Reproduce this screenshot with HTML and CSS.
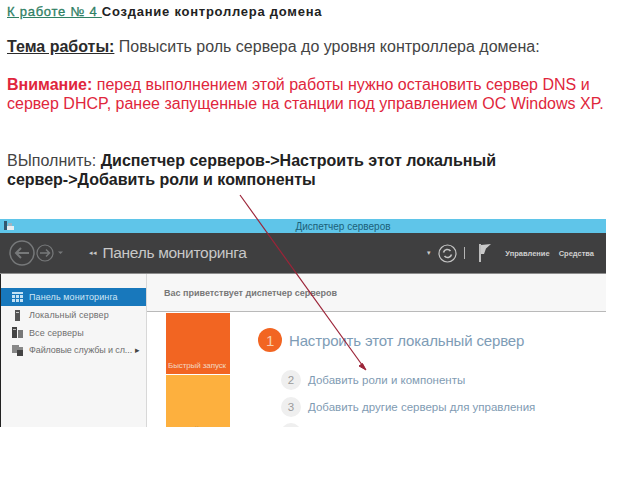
FILE: index.html
```html
<!DOCTYPE html>
<html lang="ru">

<head>
    <meta charset="UTF-8">
    <title>К работе № 4</title>
    <link rel="stylesheet" href="styles.css">
</head>

<body>
    <div class="slide">
        <div class="notes">
            <p class="title"><u class="green">К работе № 4 </u>Создание контроллера домена</p>
            <p class="topic"><b><u>Тема работы:</u></b> Повысить роль сервера до уровня контроллера домена:</p>
            <p class="warn"><b>Внимание:</b> перед выполнением этой работы нужно остановить сервер DNS и<br>сервер DHCP, ранее запущенные на станции под управлением ОС Windows XP.</p>
            <p class="todo">ВЫполнить: <b>Диспетчер серверов-&gt;Настроить этот локальный<br>сервер-&gt;Добавить роли и компоненты</b></p>
        </div>

        <div class="window">
            <div class="titlebar">
                <svg class="appicon" width="12" height="12" viewBox="0 0 12 12">
                    <rect x="1" y="1" width="3" height="9" fill="#34566e" />
                    <rect x="4" y="6" width="7" height="4" fill="#e8eef2" />
                    <rect x="5" y="3" width="4" height="3" fill="#9fb4c2" />
                </svg>
                <span>Диспетчер серверов</span>
            </div>
            <div class="toolbar">
                <div class="navs">
                    <svg width="56" height="28" viewBox="0 0 56 28" fill="none" stroke="#77797a">
                        <circle cx="13" cy="14" r="12" stroke-width="1.5" />
                        <path d="M20 14H7M12 9l-5 5 5 5" stroke-width="2" />
                        <circle cx="36" cy="14" r="8" stroke-width="1.2" />
                        <path d="M31 14h9M37 10.500l3.500 3.500-3.500 3.500" stroke-width="1.5" />
                        <path d="M49 12.500h5l-2.500 2.500z" fill="#77797a" stroke="none" />
                    </svg>
                </div>
                <div class="crumb"><span class="chev">◂◂</span>Панель мониторинга</div>
                <div class="tools">
                    <span class="dot">▾</span>
                    <svg width="19" height="19" viewBox="0 0 19 19" fill="none" stroke="#c4c4c4">
                        <circle cx="9.500" cy="9.500" r="8.500" stroke-width="1.200" />
                        <path d="M5.500 8.500a4 4 0 0 1 7-1.500M13.500 10.500a4 4 0 0 1-7 1.500" stroke-width="1.600" />
                    </svg>
                    <span class="sep"></span>
                    <svg class="flag" width="12" height="18" viewBox="0 0 12 18">
                        <rect x="0" y="0" width="2" height="18" fill="#bdbdbd" />
                        <path d="M2 1L12 0 7 4.500 5 10H2z" fill="#c9c9c9" />
                    </svg>
                    <span class="menu">Управление</span>
                    <span class="menu">Средства</span>
                </div>
            </div>
            <div class="body">
                <ul class="side">
                    <li class="active">
                        <svg class="ico" width="11" height="10" viewBox="0 0 11 10" fill="#c4e2f5">
                            <rect width="11" height="2" />
                            <rect y="3" width="3" height="3" />
                            <rect x="4" y="3" width="3" height="3" />
                            <rect x="8" y="3" width="3" height="3" />
                            <rect y="7" width="3" height="3" />
                            <rect x="4" y="7" width="3" height="3" />
                            <rect x="8" y="7" width="3" height="3" />
                        </svg>
                        Панель мониторинга
                    </li>
                    <li>
                        <svg class="ico" width="11" height="11" viewBox="0 0 11 11">
                            <rect x="3" width="5" height="11" fill="#555" />
                            <rect x="4" y="2" width="3" height="1" fill="#ccc" />
                        </svg>
                        Локальный сервер
                    </li>
                    <li>
                        <svg class="ico" width="11" height="11" viewBox="0 0 11 11">
                            <rect width="5" height="11" fill="#444" />
                            <rect x="6" y="3" width="5" height="8" fill="#777" />
                            <rect x="1" y="2" width="3" height="1" fill="#bbb" />
                        </svg>
                        Все серверы
                    </li>
                    <li>
                        <svg class="ico" width="11" height="11" viewBox="0 0 11 11">
                            <rect width="7" height="2" fill="#888" />
                            <rect y="2" width="11" height="6" fill="#888" />
                            <rect x="5" y="5" width="6" height="6" fill="#444" />
                        </svg>
                        <span class="tight">Файловые службы и сл...</span><span class="more">▸</span>
                    </li>
                </ul>
                <div class="main">
                    <div class="hello">Вас приветствует диспетчер серверов</div>
                    <div class="panel">
                        <div class="tiles">
                            <div class="tile orange">Быстрый запуск</div>
                            <div class="tile yellow">Настройки</div>
                        </div>
                        <div class="steps">
                            <div class="step first"><span class="num">1</span>Настроить этот локальный сервер</div>
                            <div class="step"><span class="num">2</span>Добавить роли и компоненты</div>
                            <div class="step"><span class="num">3</span>Добавить другие серверы для управления</div>
                            <div class="step"><span class="num"></span></div>
                        </div>
                    </div>
                </div>
            </div>
        </div>

        <svg class="arrow" width="640" height="480" viewBox="0 0 640 480">
            <path d="M240 195L365 369" stroke="#9c2438" stroke-width="1.200" fill="none" />
            <path d="M366 370l-7-4 3.500-2.500z" fill="#9c2438" stroke="#9c2438" />
        </svg>
    </div>
</body>

</html>
```

FILE: styles.css
```css
html,
body {
    margin: 0;
    background: #fff;
}

.slide {
    position: relative;
    width: 640px;
    height: 480px;
    overflow: hidden;
    font-family: "Liberation Sans", Arial, sans-serif;
}

.notes {
    height: 219px;
    padding: 4px 0 0 7px;
    box-sizing: border-box;
    font-size: 16px;
    line-height: 19.500px;
    color: #3c3c3c;
    white-space: nowrap;
}

.notes p {
    margin: 0;
}

.title {
    font-size: 13px;
    font-weight: bold;
    letter-spacing: 0.75px;
    color: #222;
    line-height: 16px;
}

.green {
    font-weight: normal;
    color: #2f8064;
    -webkit-text-stroke: 0.3px #2f8064;
}

.topic {
    padding-top: 17px;
    color: #444;
}

.topic b {
    color: #2b2b2b;
}

.warn {
    padding-top: 18px;
    color: #e0263c;
}

.todo {
    padding-top: 37px;
    color: #444;
}

.todo b {
    color: #222;
}

.window {
    width: 606px;
    height: 208px;
    display: flex;
    flex-direction: column;
    overflow: hidden;
    background: #fff;
}

.titlebar {
    height: 14px;
    flex: none;
    display: flex;
    align-items: center;
    justify-content: center;
    padding-left: 80px;
    position: relative;
    background: #5fc5e9;
    font-size: 10px;
    color: #1c6078;
}

.appicon {
    position: absolute;
    left: 3px;
    top: 1px;
}

.toolbar {
    height: 41px;
    flex: none;
    display: flex;
    align-items: center;
    background: #3f3f40;
    color: #c9c9c9;
    border-bottom: 1px solid #8d8d8d;
    box-sizing: border-box;
}

.navs {
    width: 89px;
    padding-left: 9px;
    box-sizing: border-box;
    display: flex;
}

.crumb {
    font-size: 15.500px;
    letter-spacing: -0.3px;
    color: #c8c8c8;
    white-space: nowrap;
}

.chev {
    font-size: 7px;
    margin-right: 6px;
    vertical-align: 3px;
}

.tools {
    margin-left: auto;
    display: flex;
    align-items: center;
    padding-right: 12px;
}

.dot {
    font-size: 7px;
    margin-right: 7px;
}

.sep {
    width: 1px;
    height: 12px;
    margin: 0 14px 0 7px;
    background: #b5b5b5;
}

.flag {
    margin-right: 14px;
}

.menu {
    font-size: 7.500px;
    font-weight: bold;
    color: #cfcfcf;
    margin-right: 9px;
}

.menu:last-child {
    margin-right: 0;
}

.body {
    flex: 1;
    display: flex;
    min-height: 0;
}

.side {
    width: 147px;
    flex: none;
    margin: 0;
    padding: 14px 0 0;
    list-style: none;
    box-sizing: border-box;
    background: #f6f6f6;
    border-left: 1px solid #222;
    border-right: 1px solid #d8d8d8;
    font-size: 9px;
    color: #6e6e6e;
}

.side li {
    height: 17.500px;
    display: flex;
    align-items: center;
    padding-left: 11px;
    letter-spacing: 0.1px;
    white-space: nowrap;
}

.side .active {
    background: #1878bc;
    color: #cfe6f5;
    margin-bottom: 1px;
}

.ico {
    margin-right: 6px;
    flex: none;
}

.tight {
    letter-spacing: -0.1px;
}

.more {
    margin-left: 3px;
    color: #444;
}

.main {
    flex: 1;
    min-width: 0;
    display: flex;
    flex-direction: column;
}

.hello {
    height: 38px;
    flex: none;
    box-sizing: border-box;
    padding: 14px 0 0 17px;
    background: #f7f7f7;
    border-bottom: 1px solid #b9b9b9;
    font-size: 9px;
    font-weight: bold;
    color: #777;
}

.panel {
    flex: 1;
    min-height: 0;
    display: flex;
    padding-left: 19px;
    overflow: hidden;
}

.tiles {
    width: 64px;
    flex: none;
    display: flex;
    flex-direction: column;
    padding-top: 1px;
    font-size: 8px;
    letter-spacing: -0.1px;
    color: #f3d6c0;
}

.tile {
    box-sizing: border-box;
    flex: none;
    padding: 0 0 0 2px;
    white-space: nowrap;
}

.orange {
    height: 61px;
    padding-top: 48px;
    background: #f26522;
}

.yellow {
    height: 60px;
    margin-top: 1px;
    padding-top: 50px;
    background: #fdb03e;
    color: #a9804a;
}

.steps {
    padding: 14px 0 0 28px;
    font-size: 11.500px;
    color: #7f9bb3;
    white-space: nowrap;
}

.step {
    height: 26.500px;
    display: flex;
    align-items: center;
    padding-left: 23px;
}

.step .num {
    width: 20px;
    height: 20px;
    margin-right: 7px;
    flex: none;
    border-radius: 50%;
    display: flex;
    align-items: center;
    justify-content: center;
    background: #efefef;
    color: #9a9a9a;
}

.step.first {
    height: 28px;
    padding-left: 0;
    margin-bottom: 13px;
    font-size: 15px;
    letter-spacing: -0.15px;
    color: #7e9cb6;
}

.step.first .num {
    width: 24px;
    height: 24px;
    margin-right: 7px;
    background: #f26522;
    color: #f8cfae;
}

.arrow {
    position: absolute;
    left: 0;
    top: 0;
    pointer-events: none;
}
```
